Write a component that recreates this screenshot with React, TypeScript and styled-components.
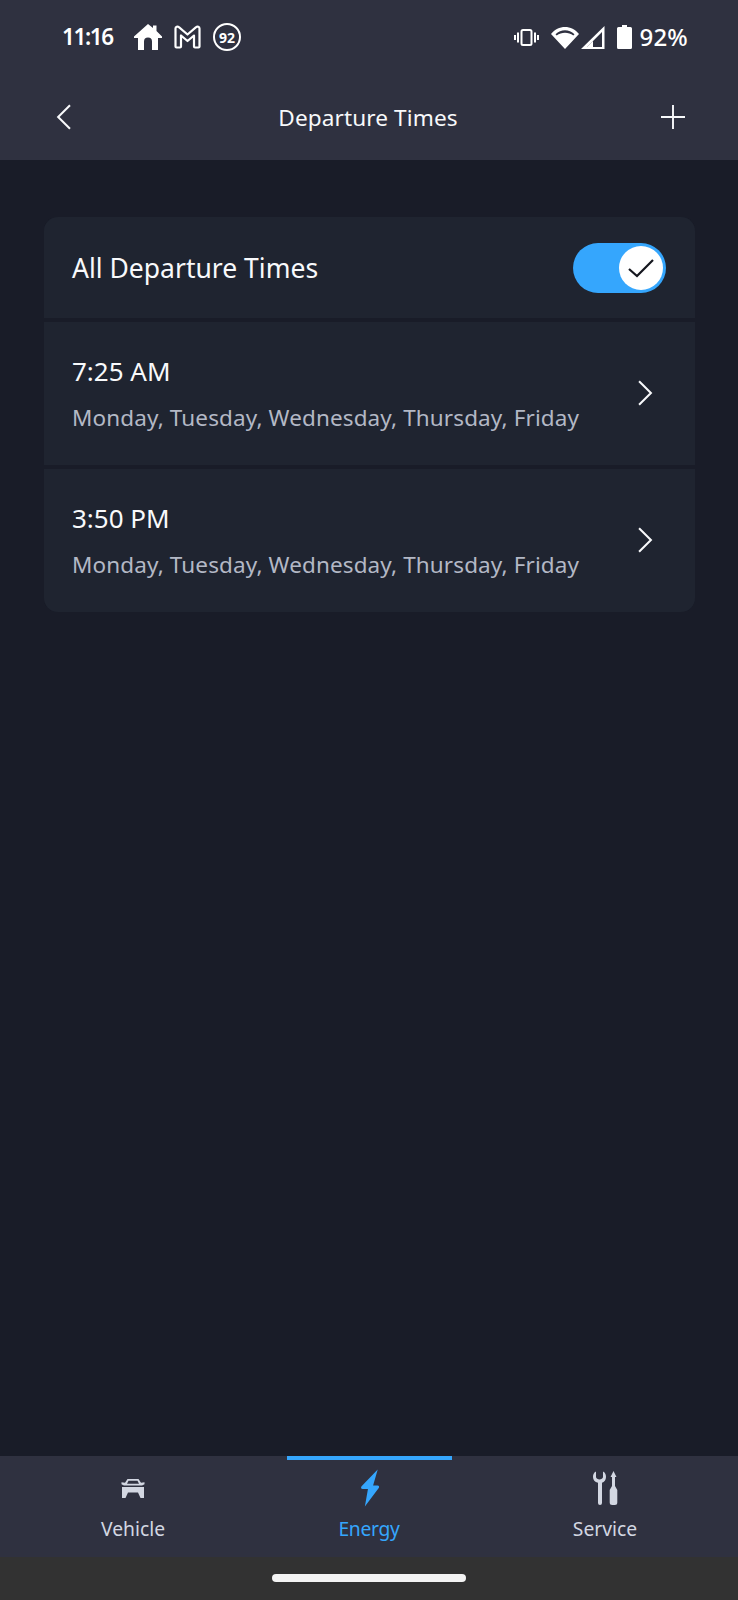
import styled, {createGlobalStyle} from 'styled-components';

const COLOR = {
    page: '#191c28',
    bar: '#2f3140',
    card: '#1f2430',
    blue: '#35a6fd',
    white: '#f8f9fb',
    muted: '#b3b8c5',
    tabText: '#d3d7e2',
};

const SCHEDULES = [
    {time: '7:25 AM', days: 'Monday, Tuesday, Wednesday, Thursday, Friday'},
    {time: '3:50 PM', days: 'Monday, Tuesday, Wednesday, Thursday, Friday'},
];

const Chevron = ({dir, size}: {dir: 'left' | 'right'; size: number}) => (
    <svg width={size * 0.58} height={size} viewBox="0 0 14 24" fill="none">
        <path
            d={dir === 'left' ? 'M13 1 2 12l11 11' : 'M1 1l11 11L1 23'}
            stroke={COLOR.white}
            strokeWidth="1.9"
        />
    </svg>
);

const HomeIcon = () => (
    <svg width="28" height="26" viewBox="0 0 28 26">
        <path
            fill="#fff"
            fillRule="evenodd"
            d="M14 0 19 4V1.500h3.500V7L28 12.500V14h-4V26H18V17.500a4 4 0 0 0-8 0V26H4V14H0V12.500Z"
        />
    </svg>
);

const MailIcon = () => (
    <svg width="27" height="24" viewBox="0 0 27 24" fill="none">
        <path
            stroke="#fff"
            strokeWidth="2.2"
            strokeLinejoin="round"
            d="M1.500 3.500C1.500 1.800 3.600 1 4.900 2.200L13.500 9.500 22.100 2.200C23.400 1 25.500 1.800 25.500 3.500V21.500a1 1 0 0 1-1 1H21a1 1 0 0 1-1-1V10.500L13.500 16 7 10.500V21.500a1 1 0 0 1-1 1H2.500a1 1 0 0 1-1-1Z"
        />
    </svg>
);

const VibrateIcon = () => (
    <svg width="25" height="17" viewBox="0 0 25 17" fill="none">
        <rect x="7.500" y="1" width="10" height="15" rx="1.500" stroke="#fff" strokeWidth="2" />
        <path stroke="#fff" strokeWidth="2" d="M4 3.500v10M1 6v5M21 3.500v10M24 6v5" />
    </svg>
);

const WifiIcon = () => (
    <svg width="28" height="23" viewBox="0 0 28 23">
        <path
            fill="#fff"
            fillRule="evenodd"
            d="M14 23 0 8C7-1.500 21-1.500 28 8ZM4.500 8.200 5.700 9.500C10.500 5.800 17.500 5.800 22.300 9.500L23.500 8.200C18 3 10 3 4.500 8.200Z"
        />
    </svg>
);

const SignalIcon = () => (
    <svg width="24" height="23" viewBox="0 0 24 23" fill="none">
        <path fill="#fff" d="M23.500 0V23H0ZM21 6 6 21H21Z" fillRule="evenodd" />
        <path fill="#fff" d="M6 21 12 15V21Z" />
    </svg>
);

const BatteryIcon = () => (
    <svg width="15" height="24" viewBox="0 0 15 24">
        <path
            fill="#fff"
            d="M5 0h5v2h3.500a1.500 1.500 0 0 1 1.500 1.500V22.500a1.500 1.500 0 0 1-1.500 1.500H1.500A1.500 1.500 0 0 1 0 22.500V3.500A1.500 1.500 0 0 1 1.500 2H5Z"
        />
    </svg>
);

const CarIcon = () => (
    <svg width="24" height="19" viewBox="0 0 24 19">
        <path
            fill={COLOR.tabText}
            fillRule="evenodd"
            d="M6.500 0H17.500L20 3.800 23.500 3.300V5.300L21 6.500 3 6.500.5 5.300V3.300L4 3.800ZM7.500 1.800 6 4.800H18L16.500 1.800Z"
        />
        <path fill={COLOR.tabText} d="M1 8H23V19H19.500L17 13.500H7L4.500 19H1Z" />
    </svg>
);

const BoltIcon = () => (
    <svg width="21" height="38" viewBox="0 0 19 37">
        <path
            fill={COLOR.blue}
            d="M17.500.5 2 16.500C.800 17.800 1 19.500 3 19.500H8L5 36.500 18.500 18.500C19.300 17.300 18.800 16 17.300 16H13Z"
        />
    </svg>
);

const ToolsIcon = () => (
    <svg width="25" height="34" viewBox="0 0 25 34">
        <path
            fill={COLOR.tabText}
            d="M3 .500V6C3 7.500 5 8.500 6.500 8.500S10 7.500 10 6V.500C12.500 1.700 13 4 13 6 13 9 11.300 10.800 9 11.800V32a2 2 0 0 1-4 0V11.800C1.800 10.800 0 9 0 6 0 4 .5 1.700 3 .500Z"
        />
        <path
            fill={COLOR.tabText}
            d="M20.500 0 23.500 6H22V15L24.300 19V31.500A2.500 2.500 0 0 1 21.800 34H19.200A2.500 2.500 0 0 1 16.700 31.500V19L19 15V6H17.500Z"
        />
    </svg>
);

export default function App() {
    return (
        <Page>
            <GlobalStyle />
            <Header>
                <StatusBar>
                    <StatusGroup>
                        <Clock>11:16</Clock>
                        <HomeIcon />
                        <MailIcon />
                        <Badge>92</Badge>
                    </StatusGroup>
                    <StatusGroup $right>
                        <VibrateIcon />
                        <WifiIcon />
                        <SignalIcon />
                        <BatteryIcon />
                        <Percent>92%</Percent>
                    </StatusGroup>
                </StatusBar>
                <NavBar>
                    <Chevron dir="left" size={26} />
                    <Title>Departure Times</Title>
                    <PlusIcon viewBox="0 0 24 24">
                        <path d="M12 0v24M0 12h24" stroke={COLOR.white} strokeWidth="1.900" />
                    </PlusIcon>
                </NavBar>
            </Header>

            <Content>
                <Card>
                    <ToggleRow>
                        <RowTitle>All Departure Times</RowTitle>
                        <Switch>
                            <Knob>
                                <svg width="26" height="20" viewBox="0 0 26 20" fill="none">
                                    <path d="M1 11l8 7L25 2" stroke="#15171f" strokeWidth="2.200" />
                                </svg>
                            </Knob>
                        </Switch>
                    </ToggleRow>
                    {SCHEDULES.map((item) => (
                        <TimeRow key={item.time}>
                            <TimeText>
                                <TimeLabel>{item.time}</TimeLabel>
                                <Days>{item.days}</Days>
                            </TimeText>
                            <Chevron dir="right" size={26} />
                        </TimeRow>
                    ))}
                </Card>
            </Content>

            <TabBar>
                <Tab>
                    <TabMark />
                    <TabIcon>
                        <CarIcon />
                    </TabIcon>
                    <TabLabel>Vehicle</TabLabel>
                </Tab>
                <Tab>
                    <TabMark $active />
                    <TabIcon>
                        <BoltIcon />
                    </TabIcon>
                    <TabLabel $active>Energy</TabLabel>
                </Tab>
                <Tab>
                    <TabMark />
                    <TabIcon>
                        <ToolsIcon />
                    </TabIcon>
                    <TabLabel>Service</TabLabel>
                </Tab>
            </TabBar>
            <SystemNav>
                <HomePill />
            </SystemNav>
        </Page>
    );
}

const GlobalStyle = createGlobalStyle`
    html, body {
        margin: 0;
        padding: 0;
        background: ${COLOR.page};
    }
    * {
        box-sizing: border-box;
    }
`;

const Page = styled.div`
    width: 738px;
    height: 1600px;
    display: flex;
    flex-direction: column;
    background: ${COLOR.page};
    font-family: 'Noto Sans', sans-serif;
    overflow: hidden;
`;

const Header = styled.header`
    height: 160px;
    flex-shrink: 0;
    background: ${COLOR.bar};
    display: flex;
    flex-direction: column;
`;

const StatusBar = styled.div`
    height: 76px;
    padding: 0 50px 2px 62px;
    display: flex;
    align-items: center;
    justify-content: space-between;
`;

const StatusGroup = styled.div<{$right?: boolean}>`
    display: flex;
    align-items: center;
    gap: ${({$right}) => ($right ? '0' : '12px')};
    svg:nth-child(1) {
        margin-right: ${({$right}) => ($right ? '12px' : '0')};
    }
    svg:nth-child(2) {
        margin-right: ${({$right}) => ($right ? '2px' : '0')};
    }
    svg:nth-child(3) {
        margin-right: ${({$right}) => ($right ? '12px' : '0')};
    }
    svg:nth-child(4) {
        margin-right: ${({$right}) => ($right ? '7px' : '0')};
    }
`;

const Clock = styled.span`
    width: 60px;
    margin-bottom: 2px;
    color: #fff;
    font-size: 22.5px;
    font-weight: 600;
    letter-spacing: -1.4px;
`;

const Badge = styled.span`
    width: 28px;
    height: 28px;
    border: 2px solid #fff;
    border-radius: 50%;
    color: #fff;
    font-size: 14px;
    font-weight: 700;
    display: flex;
    align-items: center;
    justify-content: center;
`;

const Percent = styled.span`
    margin-bottom: 1px;
    color: #fff;
    font-size: 24px;
    font-weight: 500;
    letter-spacing: 0.2px;
`;

const NavBar = styled.div`
    height: 84px;
    padding: 0 53px 2px 56px;
    display: flex;
    align-items: center;
    justify-content: space-between;
`;

const Title = styled.h1`
    margin: 0 0 0 4px;
    color: ${COLOR.white};
    font-size: 22.6px;
    font-weight: 400;
    letter-spacing: 0.1px;
`;

const PlusIcon = styled.svg`
    width: 24px;
    height: 24px;
`;

const Content = styled.main`
    flex: 1;
    padding: 57px 43px 0 44px;
`;

const Card = styled.section`
    display: flex;
    flex-direction: column;
    gap: 4px;
    background: ${COLOR.page};
    border-radius: 14px;
    overflow: hidden;
`;

const ToggleRow = styled.div`
    height: 101px;
    padding: 0 29px 0 28px;
    background: ${COLOR.card};
    display: flex;
    align-items: center;
    justify-content: space-between;
`;

const RowTitle = styled.span`
    color: ${COLOR.white};
    font-size: 26.5px;
`;

const Switch = styled.div`
    width: 93px;
    height: 50px;
    padding: 3px;
    border-radius: 25px;
    background: ${COLOR.blue};
    display: flex;
    justify-content: flex-end;
`;

const Knob = styled.div`
    width: 44px;
    height: 44px;
    border-radius: 50%;
    background: #fff;
    display: flex;
    align-items: center;
    justify-content: center;
`;

const TimeRow = styled.div`
    height: 143px;
    padding: 0 42px 2px 28px;
    background: ${COLOR.card};
    display: flex;
    align-items: center;
    justify-content: space-between;
`;

const TimeText = styled.div`
    display: flex;
    flex-direction: column;
    gap: 13px;
`;

const TimeLabel = styled.span`
    color: ${COLOR.white};
    font-size: 26px;
`;

const Days = styled.span`
    color: ${COLOR.muted};
    font-size: 22.5px;
    letter-spacing: 0.12px;
`;

const TabBar = styled.nav`
    height: 101px;
    flex-shrink: 0;
    background: ${COLOR.bar};
    display: grid;
    grid-template-columns: repeat(3, 236px);
    padding: 0 15px;
`;

const Tab = styled.div`
    display: flex;
    flex-direction: column;
    align-items: center;
`;

const TabMark = styled.div<{$active?: boolean}>`
    width: 165px;
    height: 4px;
    margin-bottom: 8px;
    background: ${({$active}) => ($active ? COLOR.blue : 'transparent')};
`;

const TabIcon = styled.div`
    height: 40px;
    display: flex;
    align-items: center;
    justify-content: center;
`;

const TabLabel = styled.span<{$active?: boolean}>`
    color: ${({$active}) => ($active ? COLOR.blue : COLOR.tabText)};
    font-size: 19.3px;
    letter-spacing: ${({$active}) => ($active ? '-0.3px' : '0')};
    line-height: 24px;
    margin-top: 9px;
`;

const SystemNav = styled.div`
    height: 43px;
    flex-shrink: 0;
    background: #323232;
    display: flex;
    align-items: center;
    justify-content: center;
    padding-bottom: 2px;
`;

const HomePill = styled.div`
    width: 194px;
    height: 8px;
    border-radius: 4px;
    background: #f4f4f4;
`;
